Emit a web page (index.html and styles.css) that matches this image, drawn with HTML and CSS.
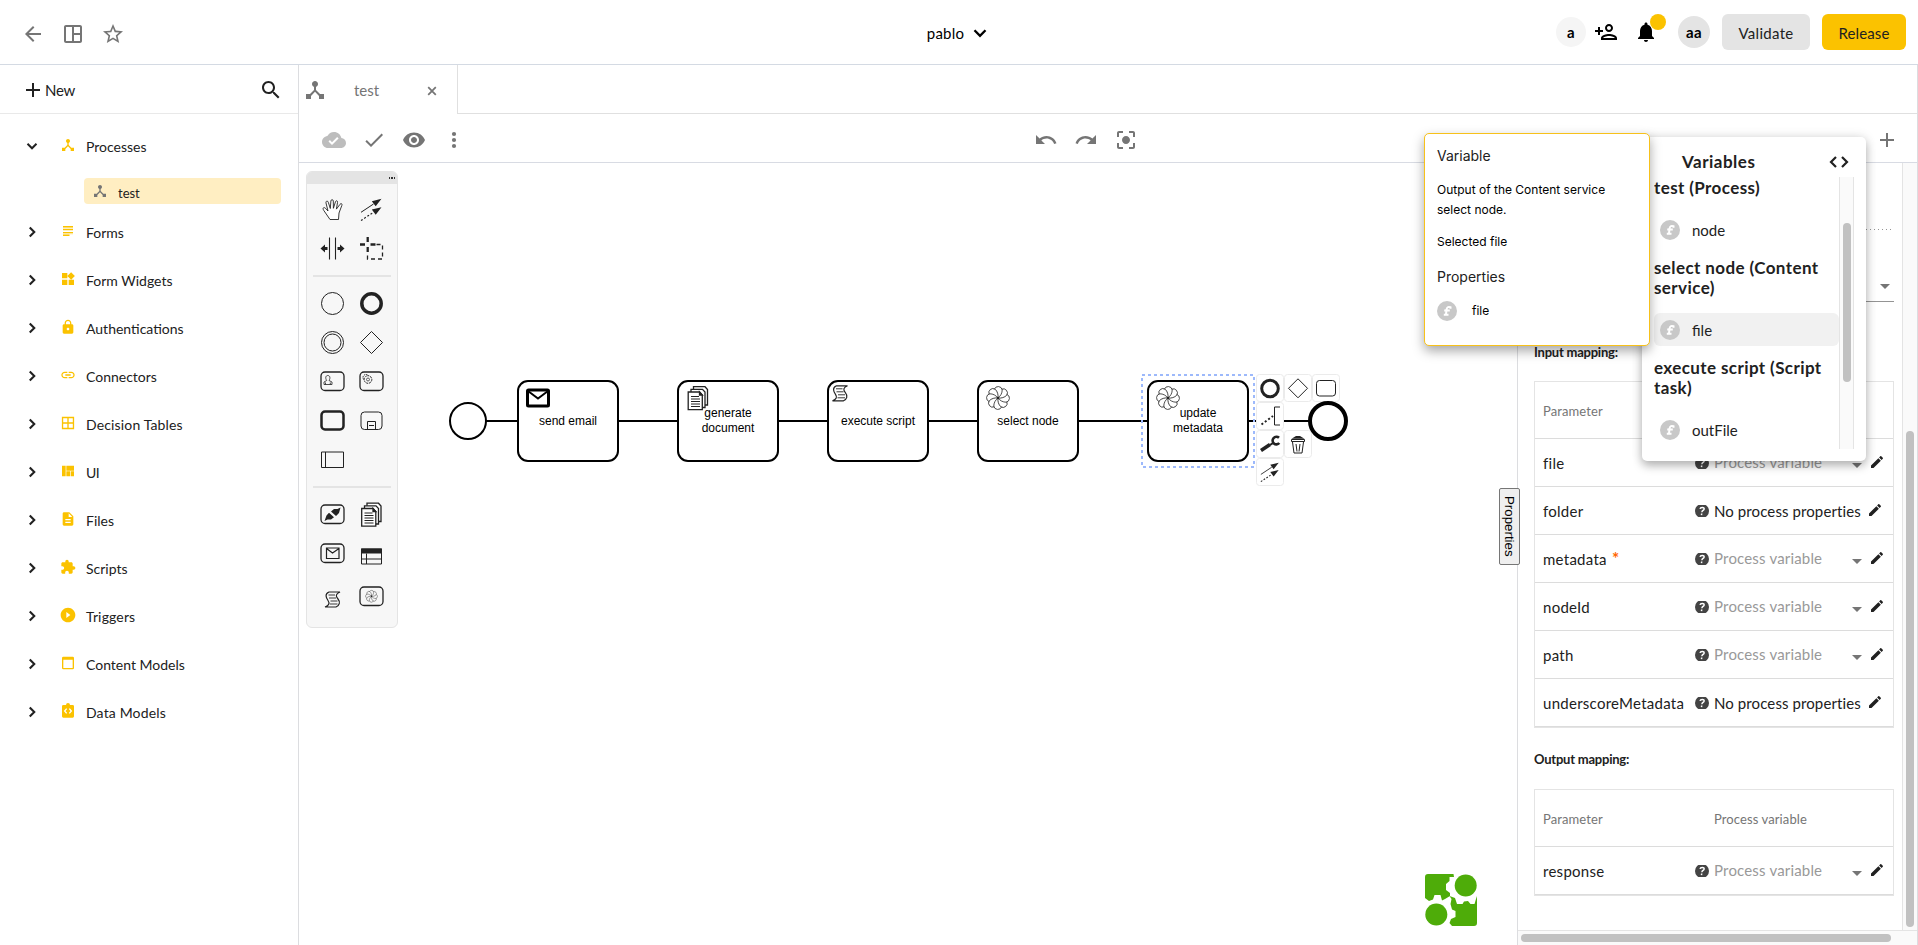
FILE: index.html
```html
<!DOCTYPE html>
<html lang="en">
<head>
<meta charset="utf-8">
<title>Modeler</title>
<link rel="stylesheet" href="styles.css">
</head>
<body>
<svg class="defs" width="0" height="0">
  <defs>
  <symbol id="back" viewBox="0 0 24 24"><path d="M20 11H7.83l5.59-5.59L12 4l-8 8 8 8 1.41-1.41L7.83 13H20v-2z"/></symbol>
  <symbol id="dash" viewBox="0 0 24 24"><path d="M19 3H5c-1.1 0-2 .9-2 2v14c0 1.1.9 2 2 2h14c1.1 0 2-.9 2-2V5c0-1.1-.9-2-2-2zM5 5h6v14H5V5zm14 14h-6v-6h6v6zm0-8h-6V5h6v6z"/></symbol>
  <symbol id="star" viewBox="0 0 24 24"><path d="M22 9.24l-7.19-.62L12 2 9.19 8.63 2 9.24l5.46 4.73L5.82 21 12 17.27 18.18 21l-1.63-7.03L22 9.24zM12 15.4l-3.76 2.27 1-4.28-3.32-2.88 4.38-.38L12 6.1l1.71 4.04 4.38.38-3.32 2.88 1 4.28L12 15.4z"/></symbol>
  <symbol id="down" viewBox="0 0 24 24"><path d="M6 9l6 6 6-6" fill="none" stroke="currentColor" stroke-width="2.6"/></symbol>
  <symbol id="right" viewBox="0 0 24 24"><path d="M9 6l6 6-6 6" fill="none" stroke="currentColor" stroke-width="2.8"/></symbol>
  <symbol id="personadd" viewBox="0 0 24 24"><path d="M15 12c2.21 0 4-1.79 4-4s-1.79-4-4-4-4 1.79-4 4 1.79 4 4 4zm0-6c1.1 0 2 .9 2 2s-.9 2-2 2-2-.9-2-2 .9-2 2-2zm0 8c-2.67 0-8 1.34-8 4v2h16v-2c0-2.66-5.33-4-8-4zm-6 4c.22-.72 3.31-2 6-2 2.7 0 5.8 1.29 6 2H9zm-3-3v-3h3v-2H6V7H4v3H1v2h3v3z"/></symbol>
  <symbol id="bell" viewBox="0 0 24 24"><path d="M12 22c1.1 0 2-.9 2-2h-4c0 1.1.89 2 2 2zm6-6v-5c0-3.07-1.64-5.64-4.5-6.32V4c0-.83-.67-1.5-1.5-1.5s-1.5.67-1.5 1.5v.68C7.63 5.36 6 7.92 6 11v5l-2 2v1h16v-1l-2-2z"/></symbol>
  <symbol id="add" viewBox="0 0 24 24"><path d="M19 13h-6v6h-2v-6H5v-2h6V5h2v6h6v2z"/></symbol>
  <symbol id="search" viewBox="0 0 24 24"><path d="M15.5 14h-.79l-.28-.27C15.41 12.59 16 11.11 16 9.5 16 5.91 13.09 3 9.5 3S3 5.91 3 9.5 5.91 16 9.5 16c1.61 0 3.09-.59 4.23-1.57l.27.28v.79l5 4.99L20.49 19l-4.99-5zm-6 0C7.01 14 5 11.99 5 9.5S7.01 5 9.5 5 14 7.01 14 9.5 11.99 14 9.5 14z"/></symbol>
  <symbol id="hub" viewBox="0 0 24 24"><path d="M17 16l-4-4V8.82C14.16 8.4 15 7.3 15 6c0-1.66-1.34-3-3-3S9 4.34 9 6c0 1.3.84 2.4 2 2.82V12l-4 4H3v5h5v-3.05l4-4.2 4 4.2V21h5v-5h-4z"/></symbol>
  <symbol id="close" viewBox="0 0 24 24"><path d="M5.5 5.5l13 13M18.5 5.5l-13 13" fill="none" stroke="currentColor" stroke-width="3"/></symbol>
  <symbol id="forms" viewBox="0 0 24 24"><path d="M2 2h20v3H2zM2 8h20v2.5H2zM2 14h20v2.5H2zM2 19h13v3H2z"/><path d="M2 5h20v3H2zM2 16.500h20v2.500H2z" opacity=".25"/></symbol>
  <symbol id="widgets" viewBox="0 0 24 24"><path d="M13 13v8h8v-8h-8zM3 21h8v-8H3v8zM3 3v8h8V3H3zm13.66-1.31L11 7.34 16.66 13l5.66-5.66-5.66-5.65z"/></symbol>
  <symbol id="lock" viewBox="0 0 24 24"><path d="M18 8h-1V6c0-2.76-2.24-5-5-5S7 3.24 7 6v2H6c-1.1 0-2 .9-2 2v10c0 1.1.9 2 2 2h12c1.100 0 2-.9 2-2V10c0-1.100-.9-2-2-2zm-6 9c-1.100 0-2-.9-2-2s.9-2 2-2 2 .9 2 2-.9 2-2 2zm3.100-9H8.900V6c0-1.710 1.390-3.100 3.100-3.100 1.710 0 3.100 1.390 3.100 3.100v2z"/></symbol>
  <symbol id="link" viewBox="0 0 24 24"><path d="M3.900 12c0-1.710 1.390-3.100 3.100-3.100h4V7H7c-2.760 0-5 2.240-5 5s2.240 5 5 5h4v-1.900H7c-1.710 0-3.100-1.390-3.100-3.100zM8 13h8v-2H8v2zm9-6h-4v1.900h4c1.710 0 3.100 1.390 3.100 3.100s-1.390 3.100-3.100 3.100h-4V17h4c2.760 0 5-2.240 5-5s-2.240-5-5-5z"/></symbol>
  <symbol id="table" viewBox="0 0 24 24"><path d="M3.800 3.800h16.400v16.400H3.800zM12 3.500v17M3.500 12h17" fill="none" stroke="currentColor" stroke-width="2"/></symbol>
  <symbol id="quilt" viewBox="0 0 24 24"><path d="M3 4h5.500v16H3zM9.500 4H21v7.500H9.500zM9.500 12.500H15V20H9.500zM16 12.500h5V20h-5z"/></symbol>
  <symbol id="file" viewBox="0 0 24 24"><path d="M14 2H6c-1.100 0-1.990.9-1.990 2L4 20c0 1.100.890 2 1.990 2H18c1.100 0 2-.9 2-2V8l-6-6zm2 16H8v-2h8v2zm0-4H8v-2h8v2zm-3-5V3.500L18.500 9H13z"/></symbol>
  <symbol id="puzzle" viewBox="0 0 24 24"><path d="M20.500 11H19V7c0-1.100-.9-2-2-2h-4V3.500C13 2.120 11.880 1 10.500 1S8 2.120 8 3.500V5H4c-1.100 0-1.990.9-1.990 2v3.800H3.500c1.490 0 2.700 1.210 2.700 2.700s-1.210 2.700-2.700 2.700H2V20c0 1.100.9 2 2 2h3.800v-1.500c0-1.490 1.210-2.700 2.700-2.700 1.490 0 2.700 1.210 2.700 2.700V22H17c1.100 0 2-.9 2-2v-4h1.500c1.380 0 2.500-1.120 2.500-2.500S21.880 11 20.500 11z"/></symbol>
  <symbol id="play" viewBox="0 0 24 24"><path d="M12 1C5.900 1 1 5.900 1 12s4.900 11 11 11 11-4.900 11-11S18.100 1 12 1zM9.500 16.500v-9l6 4.500-6 4.500z"/></symbol>
  <symbol id="window" viewBox="0 0 24 24"><path d="M5 2.500h14a2 2 0 0 1 2 2v15a2 2 0 0 1-2 2H5a2 2 0 0 1-2-2v-15a2 2 0 0 1 2-2zM5 7v12.500h14V7z" fill-rule="evenodd"/></symbol>
  <symbol id="data" viewBox="0 0 24 24"><path d="M5 3h4a3 3 0 0 1 6 0h4a2 2 0 0 1 2 2v15a2 2 0 0 1-2 2H5a2 2 0 0 1-2-2V5a2 2 0 0 1 2-2z"/><path d="M10 8.500L7 12l3 3.500M14 8.500l3 3.500-3 3.500" fill="none" stroke="#fff" stroke-width="2"/></symbol>
  <symbol id="cloud" viewBox="0 0 24 24"><path d="M19.350 10.040C18.670 6.590 15.640 4 12 4 9.110 4 6.600 5.640 5.350 8.040 2.340 8.360 0 10.910 0 14c0 3.310 2.690 6 6 6h13c2.760 0 5-2.240 5-5 0-2.640-2.050-4.780-4.650-4.960zM10 17l-3.500-3.500 1.410-1.410L10 14.170 15.180 9l1.410 1.410L10 17z"/></symbol>
  <symbol id="done" viewBox="0 0 24 24"><path d="M9 16.200L4.800 12l-1.400 1.400L9 19 21 7l-1.400-1.400L9 16.200z"/></symbol>
  <symbol id="eye" viewBox="0 0 24 24"><path d="M12 4.500C7 4.500 2.730 7.610 1 12c1.730 4.390 6 7.500 11 7.500s9.270-3.110 11-7.500c-1.730-4.390-6-7.500-11-7.500zM12 17c-2.760 0-5-2.240-5-5s2.240-5 5-5 5 2.240 5 5-2.240 5-5 5zm0-8c-1.660 0-3 1.340-3 3s1.340 3 3 3 3-1.340 3-3-1.340-3-3-3z"/></symbol>
  <symbol id="more" viewBox="0 0 24 24"><circle cx="12" cy="6" r="2.100"/><circle cx="12" cy="12" r="2.100"/><circle cx="12" cy="18" r="2.100"/></symbol>
  <symbol id="undo" viewBox="0 0 24 24"><path d="M12.500 8c-2.650 0-5.050.990-6.900 2.600L2 7v9h9l-3.620-3.620c1.390-1.160 3.160-1.880 5.120-1.880 3.540 0 6.550 2.310 7.600 5.500l2.370-.780C21.080 11.030 17.150 8 12.500 8z"/></symbol>
  <symbol id="redo" viewBox="0 0 24 24"><path d="M18.400 10.600C16.550 8.990 14.150 8 11.500 8c-4.650 0-8.580 3.030-9.960 7.220L3.900 16c1.050-3.190 4.050-5.500 7.600-5.500 1.950 0 3.730.720 5.120 1.880L13 16h9V7l-3.600 3.600z"/></symbol>
  <symbol id="focus" viewBox="0 0 24 24"><path d="M12 8c-2.210 0-4 1.790-4 4s1.790 4 4 4 4-1.790 4-4-1.790-4-4-4zm-7 7H3v4c0 1.100.9 2 2 2h4v-2H5v-4zM5 5h4V3H5c-1.100 0-2 .9-2 2v4h2V5zm14-2h-4v2h4v4h2V5c0-1.100-.9-2-2-2zm0 16h-4v2h4c1.100 0 2-.9 2-2v-4h-2v4z"/></symbol>
  <symbol id="edit" viewBox="0 0 24 24"><path d="M3 17.250V21h3.750L17.810 9.940l-3.750-3.750L3 17.250zM20.710 7.040c.390-.390.390-1.020 0-1.410l-2.340-2.340c-.390-.390-1.020-.390-1.410 0l-1.830 1.830 3.750 3.750 1.830-1.830z"/></symbol>
  <symbol id="help" viewBox="0 0 14 12"><circle cx="7" cy="6" r="7"/><path d="M5 3.900C5.500 1.800 9.500 1.900 9.100 4.100C8.800 5.500 7 5.500 6.900 7.200M6.700 8.500L6.500 10.200" fill="none" stroke="#fff" stroke-width="1.500"/></symbol>
  <symbol id="fx" viewBox="0 0 20 20"><circle cx="10" cy="10" r="10"/><path d="M13.500 7.800V6.300C11 5.400 9.800 6.300 9.600 8.500L9 13.200M7.200 9.500H12.800M6.800 13.700H11.500" fill="none" stroke="#fff" stroke-width="2"/></symbol>
  <symbol id="code" viewBox="0 0 20 12"><path d="M7 1L2 6l5 5M13 1l5 5-5 5" fill="none" stroke="currentColor" stroke-width="2.200"/></symbol>

  <g id="arrows"><path d="M-10.500 2.800L2-5.500" stroke="#222" fill="none"/><path d="M10-10.700L.3-8.300 4.200-3.200zM10-2.300L.3 0 4.200 5.200z" fill="#222"/><path d="M-10.500 11L2 2.800" stroke="#222" stroke-width="1.200" stroke-dasharray="2 1.800" fill="none"/></g>
  <path id="petal" d="M-3.600 -8.900A4.100 4.100 0 0 1 4.200-8.200C4.300-5 2.600-2 0 0" fill="none" stroke="#222" stroke-width=".8"/>
  <g id="swirl"><use href="#petal"/><use href="#petal" transform="rotate(45)"/><use href="#petal" transform="rotate(90)"/><use href="#petal" transform="rotate(135)"/><use href="#petal" transform="rotate(180)"/><use href="#petal" transform="rotate(225)"/><use href="#petal" transform="rotate(270)"/><use href="#petal" transform="rotate(315)"/><circle r="1.300" fill="#222"/></g>
  <g id="docs" stroke="#222" stroke-width="1.300" fill="#fff"><path d="M-4.500-11.300H7L9.500-8.500V7H-4.500z"/><path d="M-7-8.700H4.500L7-6V9.500H-7z"/><path d="M-9.800-6H1.500L4.300-3V11.700H-9.800z"/><path d="M-7-1.500H1M-7 1H2M-7 3.500H2M-7 6H2M-7 8.500H2" stroke-width="1"/><path d="M1.500-6V-3H4.300z" fill="#222"/></g>
  <g id="scroll" stroke="#222" fill="none"><path d="M-3.500-7.500H7.500C3-5.500 3-3.500 5.500-.5S7 6 3.500 7.500H-7.500C-3.500 6-2.500 4-4.500 1S-8-5.500-3.500-7.500z" stroke-width="1.200"/><path d="M-4-4.500H2.500M-3.500-1.500H3.500M-2 1.500H5M-2.500 4.500H5" stroke-width=".9"/></g>
  </defs>
</svg>

<div class="app">
  <header class="header">
    <div class="header-left">
      <svg class="i24"><use href="#back"/></svg><svg class="i24"><use href="#dash"/></svg><svg class="i24"><use href="#star"/></svg>
    </div>
    <div class="project"><span>pablo</span><svg class="i20"><use href="#down"/></svg></div>
    <div class="header-right">
      <span class="avatar small">a</span>
      <svg class="i24 padd"><use href="#personadd"/></svg>
      <span class="bell"><svg class="i24"><use href="#bell"/></svg><i class="dot"></i></span>
      <span class="avatar">aa</span>
      <button class="btn grey">Validate</button>
      <button class="btn yellow">Release</button>
    </div>
  </header>

  <div class="main">
    <aside class="side">
      <div class="side-top"><svg class="i24"><use href="#add"/></svg><span class="new">New</span><svg class="i24 find"><use href="#search"/></svg></div>
      <ul class="tree">
        <li><svg class="chev"><use href="#down"/></svg><svg class="ic"><use href="#hub"/></svg><span>Processes</span></li>
        <li class="child"><div class="sel"><svg class="ic"><use href="#hub"/></svg><span>test</span></div></li>
        <li><svg class="chev"><use href="#right"/></svg><svg class="ic s12"><use href="#forms"/></svg><span>Forms</span></li>
        <li><svg class="chev"><use href="#right"/></svg><svg class="ic"><use href="#widgets"/></svg><span>Form Widgets</span></li>
        <li><svg class="chev"><use href="#right"/></svg><svg class="ic"><use href="#lock"/></svg><span>Authentications</span></li>
        <li><svg class="chev"><use href="#right"/></svg><svg class="ic"><use href="#link"/></svg><span>Connectors</span></li>
        <li><svg class="chev"><use href="#right"/></svg><svg class="ic"><use href="#table"/></svg><span class="wide">Decision Tables</span></li>
        <li><svg class="chev"><use href="#right"/></svg><svg class="ic"><use href="#quilt"/></svg><span class="tight">UI</span></li>
        <li><svg class="chev"><use href="#right"/></svg><svg class="ic"><use href="#file"/></svg><span>Files</span></li>
        <li><svg class="chev"><use href="#right"/></svg><svg class="ic"><use href="#puzzle"/></svg><span>Scripts</span></li>
        <li><svg class="chev"><use href="#right"/></svg><svg class="ic"><use href="#play"/></svg><span class="wide">Triggers</span></li>
        <li><svg class="chev"><use href="#right"/></svg><svg class="ic"><use href="#window"/></svg><span>Content Models</span></li>
        <li><svg class="chev"><use href="#right"/></svg><svg class="ic"><use href="#data"/></svg><span class="wide">Data Models</span></li>
      </ul>
    </aside>

    <section class="work">
      <div class="tabs">
        <div class="tab"><svg class="i24"><use href="#hub"/></svg><span>test</span><svg class="x"><use href="#close"/></svg></div>
        <div class="tabs-rest"></div>
      </div>
      <div class="toolbar">
        <div class="tools-left"><svg class="i24 dim"><use href="#cloud"/></svg><svg class="i24"><use href="#done"/></svg><svg class="i24"><use href="#eye"/></svg><svg class="i24"><use href="#more"/></svg></div>
        <div class="tools-mid"><svg class="i24"><use href="#undo"/></svg><svg class="i24"><use href="#redo"/></svg><svg class="i24"><use href="#focus"/></svg></div>
        <svg class="i24 plus"><use href="#add"/></svg>
      </div>

      <div class="body">
        <div class="canvas">
          <svg class="diagram" viewBox="299 163 1218 782" width="1218" height="782">
            <g stroke="#000" stroke-width="2" fill="#fff">
              <path d="M486 421H518M618 421H678M778 421H828M928 421H978M1078 421H1148M1248 421H1310"/>
              <circle cx="468" cy="421" r="18"/>
              <rect x="518" y="381" width="100" height="80" rx="10"/>
              <rect x="678" y="381" width="100" height="80" rx="10"/>
              <rect x="828" y="381" width="100" height="80" rx="10"/>
              <rect x="978" y="381" width="100" height="80" rx="10"/>
              <rect x="1148" y="381" width="100" height="80" rx="10"/>
            </g>
            <rect x="1142" y="375" width="112" height="92" fill="none" stroke="#9db9fb" stroke-width="2" stroke-dasharray="3 3"/>
            <rect x="527.500" y="390" width="21" height="16" rx="1" fill="none" stroke="#000" stroke-width="3"/><path d="M528 391L538 398.500 548 391" fill="none" stroke="#000" stroke-width="2"/>
            <use href="#docs" x="698" y="398"/><use href="#scroll" x="840" y="393.300"/>
            <use href="#swirl" x="998" y="398"/><use href="#swirl" x="1168" y="398"/>
            <g class="node-text">
              <text x="568" y="425">send email</text><text x="728" y="417">generate</text><text x="728" y="432">document</text>
              <text x="878" y="425">execute script</text><text x="1028" y="425">select node</text><text x="1198" y="417">update</text><text x="1198" y="432">metadata</text>
            </g>
            <g fill="#fff" stroke="#ebebeb">
              <rect x="1256.500" y="374.500" width="27" height="27" rx="3"/><rect x="1284.500" y="374.500" width="27" height="27" rx="3"/><rect x="1312.500" y="374.500" width="27" height="27" rx="3"/>
              <rect x="1256.500" y="402.500" width="27" height="27" rx="3"/><rect x="1256.500" y="430.500" width="27" height="27" rx="3"/><rect x="1284.500" y="430.500" width="27" height="27" rx="3"/><rect x="1256.500" y="458.500" width="27" height="27" rx="3"/>
            </g>
            <g fill="none" stroke="#222">
              <circle cx="1328" cy="421" r="18" stroke="#000" stroke-width="4" fill="#fff"/>
              <circle cx="1270" cy="388.500" r="8.300" stroke-width="3"/>
              <path d="M1298 378.800L1307.500 388.300 1298 397.800 1288.500 388.300z"/>
              <rect x="1316.500" y="380.500" width="19" height="15.500" rx="3"/>
              <path d="M1280 407H1274.500V425H1280"/><path d="M1261.500 424.500L1273 416" stroke-width="2" stroke-dasharray="2 2.200"/>
              <path d="M1261 450.500L1270 444.500" stroke-width="3.500"/><path d="M1270 445L1274 442.500" stroke-width="2"/><path d="M1279 437.800A3.800 3.800 0 1 0 1279.300 443" stroke-width="2.600"/>
              <path d="M1291.500 439.500H1304.500V441.500H1291.500zM1292.500 442L1294 453H1302L1303.500 442" stroke-width="1"/><path d="M1296 444L1297 451.500M1300 444L1299 451.500" stroke-width="1"/><path d="M1291.500 438.800L1296 436H1300L1304.500 438.800z" fill="#222" stroke="none"/>
            </g>
            <g transform="translate(1270 472) scale(.87)"><use href="#arrows"/></g>
            <g transform="translate(1425 874)" fill="#4eac09">
              <path d="M3 0H28.500L29 3H24.500V7L21 10V16L25 19V22L20 25 17 26.500 15.500 21H9.500L8 25.500 4 27 0 24V3a3 3 0 0 1 3-3z"/>
              <path d="M52 22V49a3 3 0 0 1-3 3H27L24.500 49 26 45 30.500 43V37L27 35.500 25.500 30 26.500 25 24.500 22 30 24 32 30H37.500L39 27.500 43 27 45.500 30H49.500L51 25z"/>
              <circle cx="40.700" cy="11.500" r="11"/><circle cx="11.300" cy="40.500" r="11"/>
            </g>
          </svg>

          <div class="palette">
            <div class="palette-head"><i></i><i></i><i></i></div>
            <div class="grid">
              <svg viewBox="-19.500 -19.500 39 39"><path d="M-2.500 10L-8.800.8C-10.300-1.500-8.600-2.800-7-1.200L-4.500 1.500-6.500-6.500C-6.800-8.800-4.600-9-4.200-7.200L-2.200-1-1.600-8.500C-1.400-10.400.6-10.300.8-8.500L.9-1.200 3-7.800C3.600-9.400 5.500-8.800 5-7L3.900-.4 7.500-5.200C8.600-6.600 10-5.800 9.300-4L6.500 3.500 6 10z" fill="#fff" stroke="#222" stroke-width=".9"/></svg>
              <svg viewBox="-19.500 -19.500 39 39"><use href="#arrows"/></svg>
              <svg viewBox="-19.500 -19.500 39 39"><path d="M-3-11V11M3-11V11" stroke="#222" stroke-width="1.100"/><path d="M-12 0L-7.500-4V-1.500H-5V1.500H-7.500V4zM12 0L7.500-4V-1.500H5V1.500H7.500V4z" fill="#222"/></svg>
              <svg viewBox="-19.500 -19.500 39 39"><path d="M-3.800-11.500V-6.500M-3.800-1.500V3.500M-11.500-4H-6.500M-1-4H4" stroke="#222" stroke-width="2.300"/><path d="M5-4H11V10.500H-4V4" fill="none" stroke="#222" stroke-width="1.300" stroke-dasharray="4 3"/></svg>
            </div>
            <hr>
            <div class="grid">
              <svg viewBox="-19.500 -19.500 39 39"><circle r="11" fill="none" stroke="#222"/></svg>
              <svg viewBox="-19.500 -19.500 39 39"><circle r="9.700" fill="none" stroke="#222" stroke-width="3.500"/></svg>
              <svg viewBox="-19.500 -19.500 39 39"><circle r="11" fill="none" stroke="#222"/><circle r="8.500" fill="none" stroke="#222"/></svg>
              <svg viewBox="-19.500 -19.500 39 39"><path d="M0-11L11 0 0 11-11 0z" fill="none" stroke="#222"/></svg>
              <svg viewBox="-19.500 -19.500 39 39"><rect x="-11.500" y="-9.500" width="23" height="18.500" rx="4" fill="none" stroke="#222" stroke-width="1.300"/><path d="M-8.500 3V.5L-5.800-1C-7.500-3.500-6.800-6-4.700-6S-1.800-3.500-3.500-1L-.5.5V3zM-7 1V3M-2.200 1V3" fill="none" stroke="#222" stroke-width=".8"/></svg>
              <svg viewBox="-19.500 -19.500 39 39"><rect x="-11.500" y="-9.500" width="23" height="18.500" rx="4" fill="none" stroke="#222" stroke-width="1.300"/><circle cx="-5.500" cy="-4" r="3" fill="none" stroke="#222" stroke-width="1" stroke-dasharray="1.500 .8"/><circle cx="-3.500" cy="-2" r="3.800" fill="#f7f7f7" stroke="#222" stroke-width="1" stroke-dasharray="2 .8"/><circle cx="-3.500" cy="-2" r="1.500" fill="none" stroke="#222" stroke-width=".7"/></svg>
              <svg viewBox="-19.500 -19.500 39 39"><rect x="-11" y="-9" width="22" height="18" rx="3.500" fill="none" stroke="#222" stroke-width="2.500"/></svg>
              <svg viewBox="-19.500 -19.500 39 39"><rect x="-10.500" y="-8.500" width="21" height="17.500" rx="3.500" fill="none" stroke="#222"/><path d="M-4 9V1H4V9M-2.500 5H2.500" fill="none" stroke="#222"/></svg>
              <svg viewBox="-19.500 -19.500 39 39"><path d="M-11-7.500H11V8H-11zM-7-7.500V8" fill="none" stroke="#222"/></svg>
            </div>
            <hr>
            <div class="grid">
              <svg viewBox="-19.500 -19.500 39 39"><rect x="-11.500" y="-9.500" width="23" height="18.500" rx="4" fill="none" stroke="#222" stroke-width="1.300"/><path d="M-8 6.500L-6 1-3.500-1.800 1.500 2.800-1.500 5-5 5zM8-7L6.500-1.500 3.500 1.500-1.500-3 1.500-5.500 5-5.500z" fill="#222"/></svg>
              <svg viewBox="-19.500 -19.500 39 39"><use href="#docs"/></svg>
              <svg viewBox="-19.500 -19.500 39 39"><rect x="-11.500" y="-9.500" width="23" height="18.500" rx="4" fill="none" stroke="#222" stroke-width="1.300"/><path d="M-6-5.500H6.500V5H-6zM-6-5L0-.5 6.500-5" fill="none" stroke="#222" stroke-width="1.200"/></svg>
              <svg viewBox="-19.500 -19.500 39 39"><path d="M-10-4.500H10V10.500H-10zM-10 5.500H10M-5 0V10.500" fill="none" stroke="#222"/><path d="M-10.500-5H10.500V0H-10.500z" fill="#222"/></svg>
              <svg viewBox="-19.500 -19.500 39 39"><use href="#scroll" y="7"/></svg>
              <svg viewBox="-19.500 -19.500 39 39"><rect x="-11.500" y="-5.500" width="23" height="18.500" rx="4" fill="none" stroke="#222" stroke-width="1.300"/><g transform="translate(0 3.800) scale(.52)"><use href="#swirl"/></g></svg>
            </div>
          </div>
          <button class="prop-tab">Properties</button>
        </div>

        <div class="panel">
          <div class="panel-row">
            <div class="panel-content">
              <div class="dots"></div>
              <div class="select"><i class="caret"></i></div>
              <h4>Input mapping:</h4>
              <div class="map">
                <div class="row head"><span>Parameter</span><span></span><span>Process variable</span></div>
                <div class="row"><span class="name">file</span><svg class="help"><use href="#help"/></svg><span class="val">Process variable</span><i class="caret"></i><svg class="pen"><use href="#edit"/></svg></div>
                <div class="row set"><span class="name">folder</span><svg class="help"><use href="#help"/></svg><span class="val">No process properties</span><svg class="pen"><use href="#edit"/></svg></div>
                <div class="row"><span class="name">metadata <b class="req">*</b></span><svg class="help"><use href="#help"/></svg><span class="val">Process variable</span><i class="caret"></i><svg class="pen"><use href="#edit"/></svg></div>
                <div class="row"><span class="name">nodeId</span><svg class="help"><use href="#help"/></svg><span class="val">Process variable</span><i class="caret"></i><svg class="pen"><use href="#edit"/></svg></div>
                <div class="row"><span class="name">path</span><svg class="help"><use href="#help"/></svg><span class="val">Process variable</span><i class="caret"></i><svg class="pen"><use href="#edit"/></svg></div>
                <div class="row set"><span class="name">underscoreMetadata</span><svg class="help"><use href="#help"/></svg><span class="val">No process properties</span><svg class="pen"><use href="#edit"/></svg></div>
              </div>
              <h4 class="out">Output mapping:</h4>
              <div class="map">
                <div class="row head"><span>Parameter</span><span></span><span>Process variable</span></div>
                <div class="row"><span class="name">response</span><svg class="help"><use href="#help"/></svg><span class="val">Process variable</span><i class="caret"></i><svg class="pen"><use href="#edit"/></svg></div>
              </div>
            </div>
            <div class="vbar"><i></i></div>
          </div>
          <div class="hbar"><i></i></div>
        </div>
      </div>
    </section>
  </div>

  <div class="vars">
    <div class="vars-head"><span>Variables</span><svg class="codei"><use href="#code"/></svg></div>
    <div class="vars-body">
      <div class="vars-list">
        <h3>test (Process)</h3>
        <div class="var"><svg class="fx"><use href="#fx"/></svg><span>node</span></div>
        <h3>select node (Content<br>service)</h3>
        <div class="var on"><svg class="fx"><use href="#fx"/></svg><span>file</span></div>
        <h3>execute script (Script<br>task)</h3>
        <div class="var"><svg class="fx"><use href="#fx"/></svg><span>outFile</span></div>
      </div>
      <div class="vars-bar"><i></i></div>
    </div>
  </div>

  <div class="tip">
    <h5>Variable</h5>
    <p>Output of the Content service<br>select node.</p>
    <p class="p2">Selected file</p>
    <h5>Properties</h5>
    <div class="tip-var"><svg class="fx"><use href="#fx"/></svg><span>file</span></div>
  </div>
</div>
</body>
</html>
```
FILE: styles.css
```css
* { box-sizing: border-box; }
body { margin: 0; background: #fff; color: #212121; font-family: Lato, "Open Sans", sans-serif; font-size: 14px; }
svg { display: block; flex: none; fill: currentColor; }
.defs { position: absolute; }
h3, h4, h5, p, ul { margin: 0; padding: 0; }
.i24 { width: 24px; height: 24px; }
.i20 { width: 22px; height: 22px; }

.app { position: relative; width: 1918px; height: 945px; overflow: hidden; display: flex; flex-direction: column; }
.header { height: 65px; flex: none; border-bottom: 1px solid #d4dae3; display: grid; grid-template-columns: 1fr auto 1fr; align-items: center; }
.header-left { display: flex; gap: 16px; padding: 3px 0 0 21px; color: #757575; }
.project { display: flex; align-items: center; gap: 5px; color: #000; font-size: 15px; letter-spacing: .25px; padding-top: 2px; }
.header-right { display: flex; align-items: center; justify-content: flex-end; padding-right: 12px; color: #000; }
.avatar { width: 32px; height: 32px; border-radius: 50%; background: #e4e4e4; display: flex; align-items: center; justify-content: center; font-weight: 700; font-size: 15px; letter-spacing: .3px; margin-right: 12px; }
.avatar.small { width: 30px; height: 30px; background: #f5f5f5; margin-right: 8px; }
.padd { margin-right: 16px; }
.bell { position: relative; margin-right: 20px; }
.dot { position: absolute; left: 16px; top: -6px; width: 16px; height: 16px; border-radius: 50%; background: #fbc200; }
.btn { height: 36px; border: 0; border-radius: 6px; font: 15px Lato, sans-serif; color: #212121; padding: 2px 0 0; }
.btn.grey { width: 88px; background: #e4e4e4; margin-right: 12px; letter-spacing: .3px; }
.btn.yellow { width: 84px; background: #fbc200; letter-spacing: .12px; }

.main { flex: 1; display: flex; min-height: 0; }
.side { width: 299px; flex: none; border-right: 1px solid #dcdde0; }
.side-top { height: 49px; border-bottom: 1px solid #e9e9e9; display: flex; align-items: center; padding: 1px 15px 0 21px; font-size: 15px; }
.new { letter-spacing: -.25px; }
.find { margin-left: auto; }
.tree { list-style: none; padding-top: 8px; }
.tree li { height: 48px; display: flex; align-items: center; padding-left: 23px; }
.wide { letter-spacing: .15px; }
.tight { letter-spacing: -.6px; }
.chev { width: 18px; height: 18px; margin-right: 19px; }
.ic { width: 16px; height: 16px; margin: 0 10px 3px 0; color: #fbc200; }
.ic.s12 { width: 12px; height: 12px; margin: 0 12px 3px 2px; }
.tree li.child { height: 38px; padding: 8px 17px 4px 84px; }
.sel { flex: 1; height: 26px; background: #ffeec2; border-radius: 4px; display: flex; align-items: center; padding: 4px 0 0 8px; font-size: 13px; }
.sel .ic { color: #757575; margin-bottom: 4px; }

.work { flex: 1; min-width: 0; display: flex; flex-direction: column; border-right: 1px solid #dcdde0; }
.tabs { height: 49px; display: flex; flex: none; }
.tab { width: 159px; border-right: 1px solid #e0e0e0; display: flex; align-items: center; padding-left: 4px; color: #757575; font-size: 15px; }
.tab span { margin: 1px 46px 0 27px; }
.x { width: 14px; height: 14px; margin-top: 2px; }
.tabs-rest { flex: 1; border-bottom: 1px solid #e0e0e0; }
.toolbar { height: 49px; flex: none; border-bottom: 1px solid #d8dbe3; display: flex; align-items: center; color: #757575; padding: 4px 18px 0 23px; }
.tools-left, .tools-mid { display: flex; gap: 16px; }
.tools-mid { margin-left: 568px; }
.dim { color: #bdbdbd; }
.plus { margin-left: auto; }

.body { flex: 1; display: flex; min-height: 0; }
.canvas { position: relative; width: 1218px; flex: none; }
.node-text { font: 12px "Liberation Sans", Arial, sans-serif; text-anchor: middle; fill: #000; }
.palette { position: absolute; left: 7px; top: 8px; width: 92px; height: 457px; background: #f7f7f7; border: 1px solid #e4e4e4; border-radius: 6px; overflow: hidden; }
.palette-head { height: 12px; background: #e4e4e4; display: flex; justify-content: flex-end; align-items: center; gap: 1px; padding-right: 2px; margin-bottom: 6px; }
.palette-head i { width: 1.500px; height: 2px; background: #333; }
.grid { display: grid; grid-template-columns: 39px 39px; grid-auto-rows: 39px; padding-left: 6px; }
.grid svg { width: 39px; height: 39px; overflow: visible; }
.palette hr { margin: 7px 6px; border: 0; height: 2px; background: #e4e4e4; }
.prop-tab { position: absolute; left: 1200px; top: 325px; width: 21px; height: 77px; z-index: 2; writing-mode: vertical-rl; border: 1px solid #767676; border-radius: 2px; background: #efefef; color: #000; font: 13.300px "Liberation Sans", Arial, sans-serif; padding: 0; }

.panel { flex: 1; min-width: 0; border-left: 1px solid #dcdde0; display: flex; flex-direction: column; }
.panel-row { flex: 1; display: flex; min-height: 0; }
.panel-content { flex: 1; padding: 66px 8px 0 16px; }
.vbar { width: 15px; border-left: 1px solid #e4e4e4; background: #fafafa; }
.vbar i { display: block; width: 8px; height: 496px; margin: 268px 0 0 3px; border-radius: 4px; background: #c1c1c1; }
.hbar { height: 15px; border-top: 1px solid #e4e4e4; background: #fafafa; padding: 3px 0 0 3px; }
.hbar i { display: block; width: 370px; height: 8px; border-radius: 4px; background: #c1c1c1; }
.dots { height: 1px; background: repeating-linear-gradient(90deg, #949494 0 1px, transparent 1px 4px); margin-right: 3px; }
.caret { width: 10px; height: 5px; background: #757575; clip-path: polygon(0 0, 100% 0, 50% 100%); }
.select { height: 72px; border-bottom: 1px solid #949494; display: flex; justify-content: flex-end; padding: 54px 4px 0 0; }
h4 { height: 79px; font-size: 13px; line-height: 20px; letter-spacing: -.22px; padding-top: 40px; }
h4.out { height: 61px; padding-top: 21px; }
.map { border: 1px solid #e4e4e4; }
.row { height: 48px; border-bottom: 1px solid #dcdcdc; display: grid; grid-template-columns: 152px 19px 138px 17px 16px; align-items: center; padding-left: 8px; font-size: 15px; }
.row.set { grid-template-columns: 152px 19px 153px 16px; }
.row.head { height: 57px; font-size: 13px; letter-spacing: .1px; color: #757575; padding-top: 1px; }
.name { letter-spacing: .27px; white-space: nowrap; }
.row .val { color: #999; letter-spacing: .18px; padding-bottom: 2px; }
.row.set .val { color: #212121; white-space: nowrap; letter-spacing: .1px; padding-bottom: 0; }
.help { width: 14px; height: 12px; color: #444; }
.row > .caret { margin-top: 6px; }
.pen { width: 16px; height: 16px; margin-bottom: 2px; }
.req { color: #f60; margin-left: 1px; font-size: 17px; line-height: 12px; }

.vars { position: absolute; left: 1642px; top: 137px; width: 224px; height: 324px; background: #fff; border-radius: 5px; box-shadow: 0 5px 10px rgba(0,0,0,.25), 0 0 12px rgba(0,0,0,.12); z-index: 3; }
.vars-head { height: 40px; display: flex; justify-content: space-between; align-items: center; padding: 9px 17px 0 40px; font-weight: 700; font-size: 17px; letter-spacing: .5px; }
.codei { width: 20px; height: 12px; }
.vars-body { height: 272px; display: flex; padding-left: 12px; }
.vars-list { width: 185px; overflow: hidden; padding-top: 1px; }
.vars-bar { width: 15px; border: solid #e4e4e4; border-width: 0 1px; background: #fafafa; }
.vars-bar i { display: block; width: 8px; height: 159px; margin: 46px 0 0 3px; border-radius: 4px; background: #c1c1c1; }
h3 { font-size: 17px; line-height: 20px; letter-spacing: .4px; white-space: nowrap; }
.var { height: 33px; margin: 15px 0 12px; display: flex; align-items: center; gap: 12px; padding-left: 6px; border-radius: 6px; font-size: 15px; }
.var.on { background: #f1f1f1; }
.fx { width: 20px; height: 20px; color: #c8c8c8; }

.tip { position: absolute; left: 1424px; top: 133px; width: 226px; height: 213px; background: #fff; border: 1.500px solid #f7c11a; border-radius: 5px; box-shadow: 0 5px 12px rgba(0,0,0,.35); z-index: 4; padding: 12px; font: 12px/20px Inter, sans-serif; color: #000; }
.tip h5 { font-weight: 400; font-size: 14px; line-height: 20px; color: #212121; margin-bottom: 14px; }
.tip .p2 { margin: 12px 0 15px; }
.tip-var { display: flex; align-items: center; gap: 15px; }
```
